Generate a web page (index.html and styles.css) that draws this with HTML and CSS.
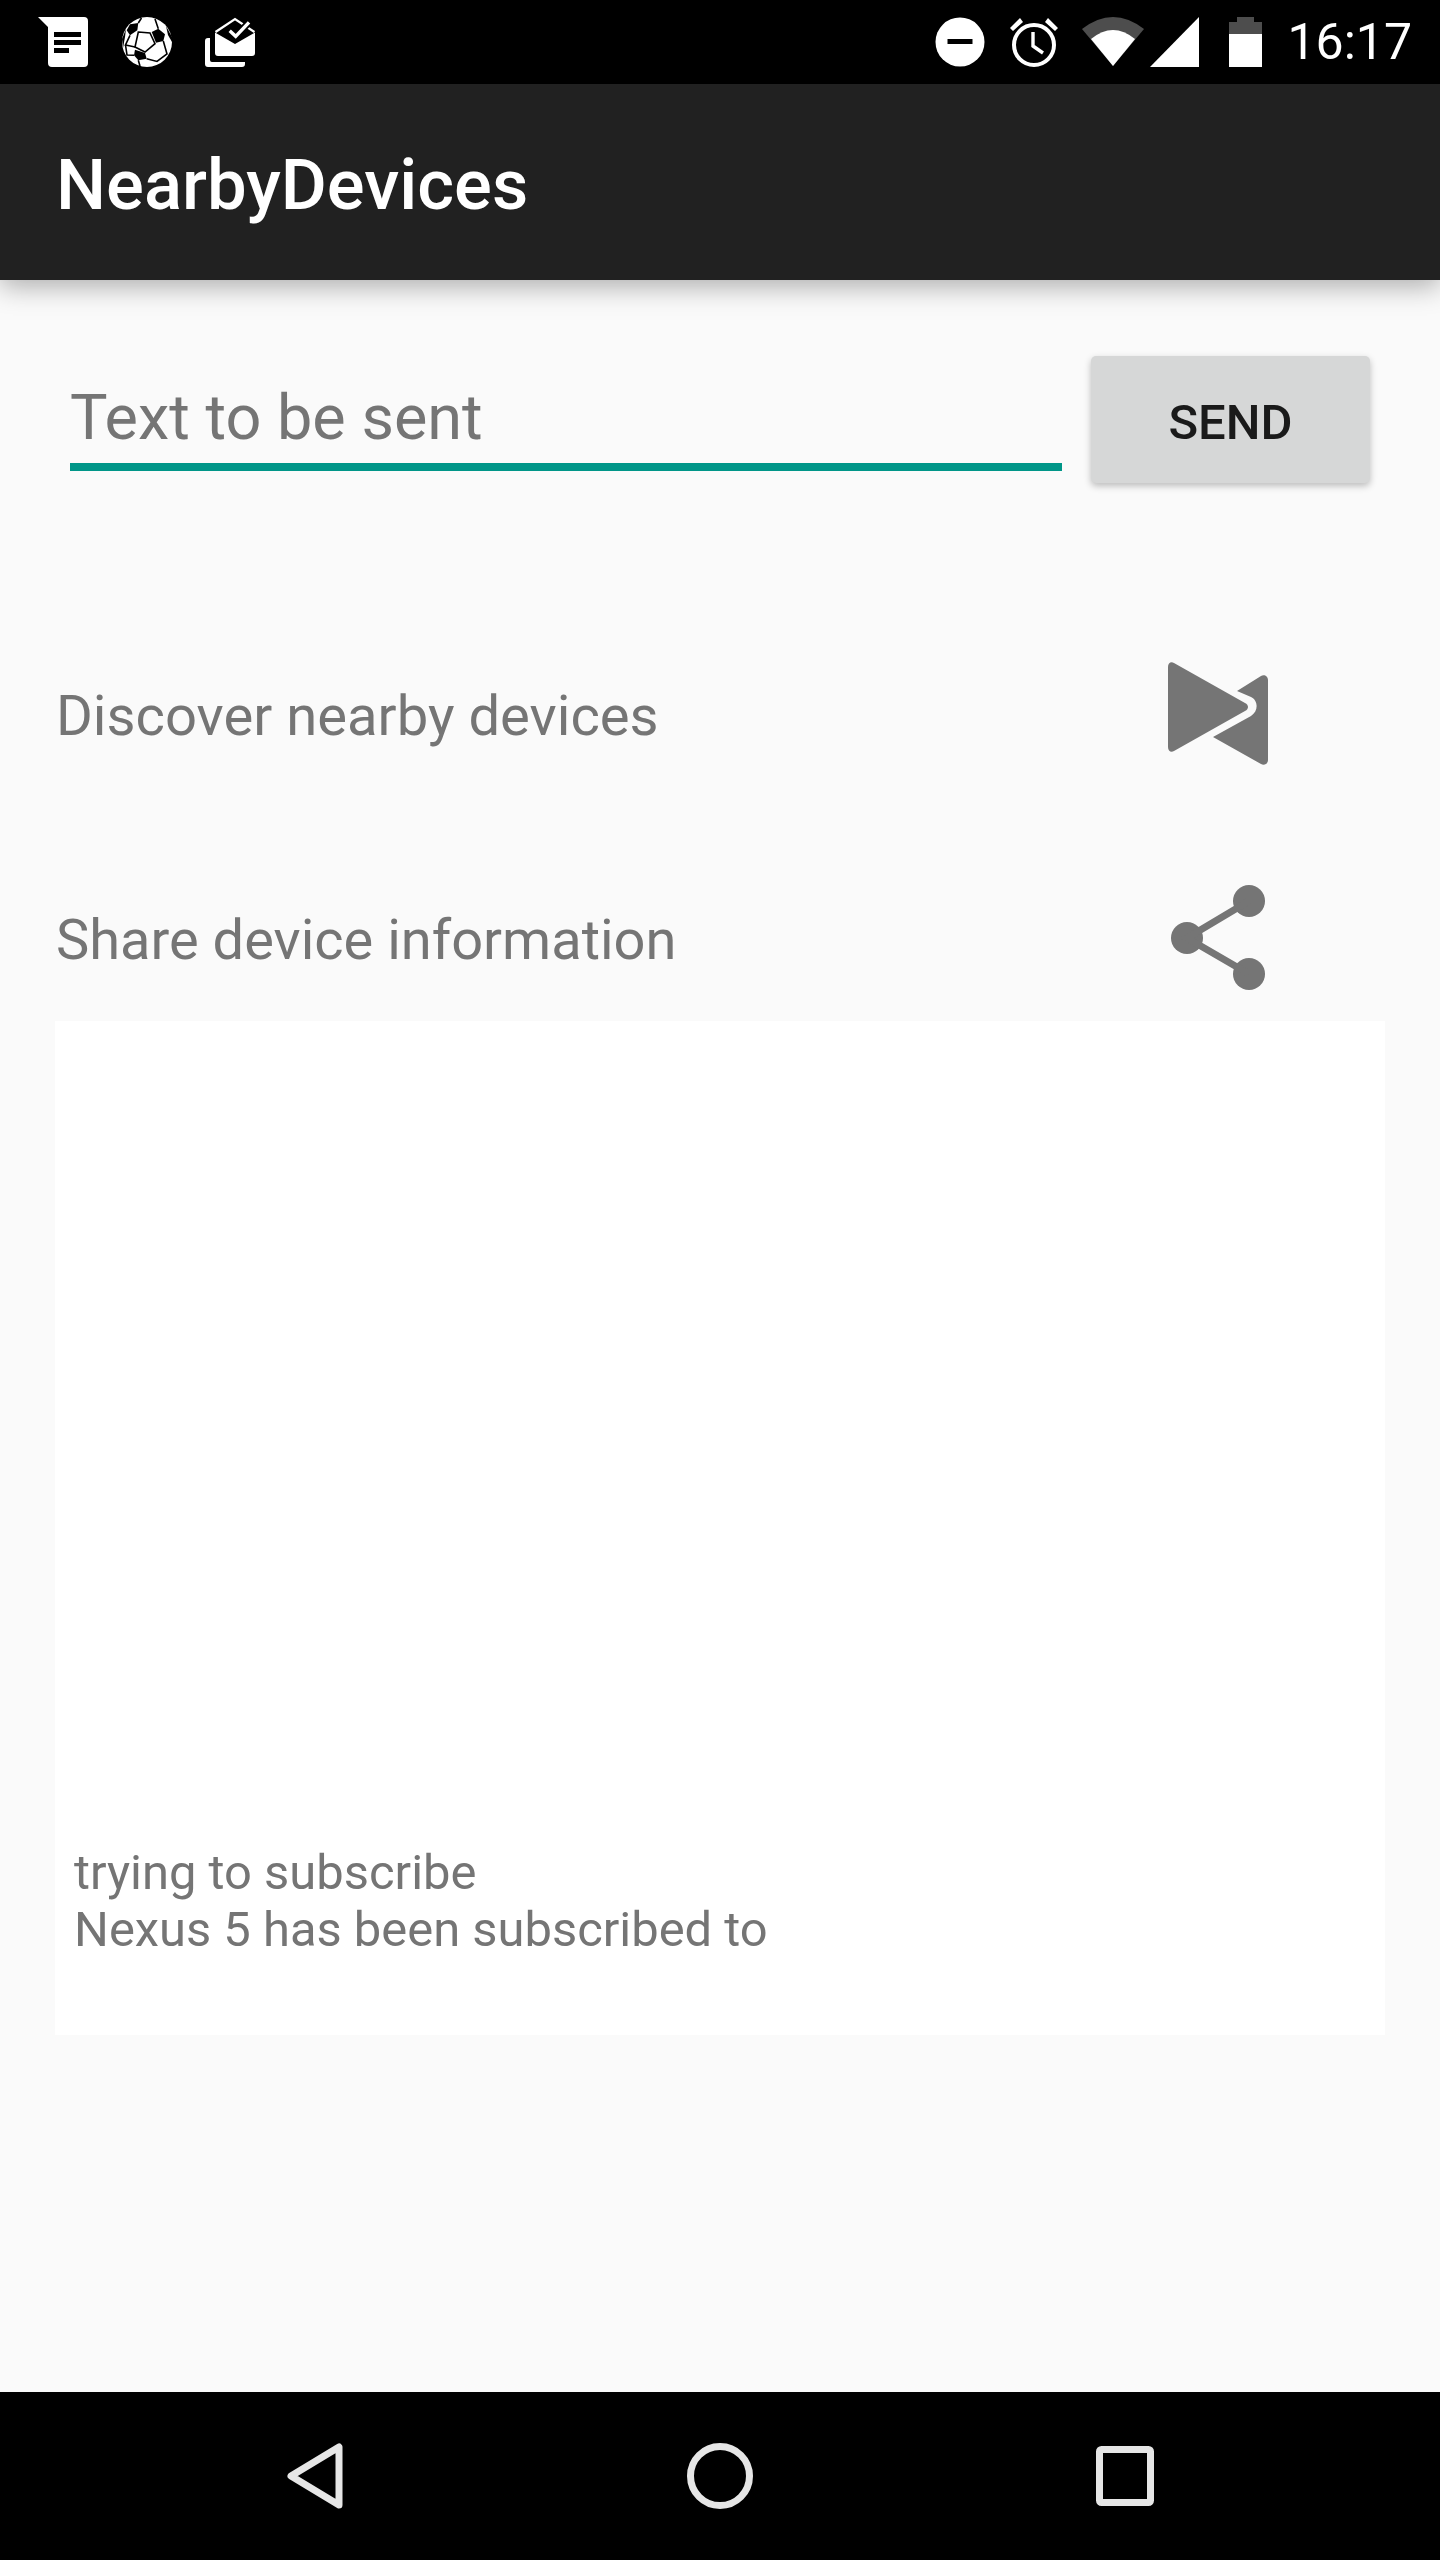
FILE: index.html
```html
<!DOCTYPE html>
<html lang="en">
<head>
    <meta charset="UTF-8">
    <title>NearbyDevices</title>
    <link rel="stylesheet" href="styles.css">
</head>
<body>
    <!-- status bar -->
    <div class="status-bar">
        <div class="status-left">
            <svg class="ic-msg" viewBox="0 0 50 50">
                <path fill="#fff" d="M0 0H46a4 4 0 0 1 4 4V46a4 4 0 0 1-4 4H14a4 4 0 0 1-4-4V10Z"/>
                <path fill="#000" d="M16 15H43V20H16ZM16 23H43V28H16ZM16 31H31V36H16Z"/>
            </svg>
            <svg class="ic-ball" viewBox="0 0 50 50">
                <circle cx="25" cy="25" r="25" fill="#fff"/>
                <g fill="#000">
                    <path d="M29.700 15 36.300 11.700 43 17.300 41.300 24 34 25.700Z"/>
                    <path d="M4.700 13.300 8 7.300 16.300 6 15.300 13.300 8 18.300Z"/>
                    <path d="M13 32.700 23 36 24.700 41.700 16.300 43.300 12 38.300Z"/>
                    <path d="M44 9 50 20 50 25 46 18Z"/>
                    <path d="M0 22 4 12 3 20 1 31Z"/>
                </g>
                <g fill="none" stroke="#000" stroke-width="1.600">
                    <path d="M16.300 15 28 16 33 26.700 23 35 13 30Z"/>
                    <path d="M16.300 6 19.500 1M36.300 11.700 33 2M8 18.300 3.500 28 13 30M41.300 24 45 37 35 44.500 24.700 41.700"/>
                    <path d="M3.500 28 5 38 12 38.300M16.300 43.300 18 49"/>
                </g>
            </svg>
            <svg class="ic-mail" viewBox="0 0 50 50">
                <path fill="#fff" d="M0 24a3 3 0 0 1 3-3H5V43a2 2 0 0 0 2 2H40V47a3 3 0 0 1-3 3H3a3 3 0 0 1-3-3Z"/>
                <path fill="#fff" d="M10 15.500 30 27 50 15.500V36a3 3 0 0 1-3 3H13a3 3 0 0 1-3-3Z"/>
                <path fill="none" stroke="#fff" stroke-width="2.200" d="M10.500 15 30 2 49.500 15"/>
                <path fill="none" stroke="#000" stroke-width="7" d="M24.700 13.700 30.700 19.300 44 5.300"/>
                <path fill="none" stroke="#fff" stroke-width="3.400" d="M24.700 13.700 30.700 19.300 44 5.300"/>
            </svg>
        </div>
        <div class="status-right">
            <svg class="ic-dnd" viewBox="0 0 50 50">
                <circle cx="25" cy="25" r="24.500" fill="#fff"/>
                <path fill="#000" d="M12.500 22H37.500V27H12.500Z"/>
            </svg>
            <svg class="ic-alarm" viewBox="0 0 48 50">
                <circle cx="24" cy="28" r="20" fill="none" stroke="#fff" stroke-width="4"/>
                <path fill="none" stroke="#fff" stroke-width="3.400" d="M23 15V29L33 36"/>
                <path fill="#fff" d="M0 11 10 1 13 5 3 14ZM48 11 38 1 35 5 45 14Z"/>
            </svg>
            <svg class="ic-wifi" viewBox="0 0 62 50">
                <path fill="#4d4d4d" d="M0 12Q31 -12 62 12L31 49Z"/>
                <path fill="#fff" d="M9 22Q31 4 53 22L31 49Z"/>
            </svg>
            <svg class="ic-signal" viewBox="0 0 49 50">
                <path fill="#fff" d="M0 50 49 0V50Z"/>
            </svg>
            <svg class="ic-battery" viewBox="0 0 33 50">
                <path fill="#4d4d4d" d="M8 0H25V5H33V17H0V5H8Z"/>
                <path fill="#fff" d="M0 17H33V50H0Z"/>
            </svg>
            <span class="clock">16:17</span>
        </div>
    </div>

    <!-- app bar -->
    <div class="app-bar">NearbyDevices</div>

    <!-- content -->
    <div class="content">
        <div class="send-row">
            <div class="text-field">Text to be sent</div>
            <div class="send-btn">SEND</div>
        </div>
        <div class="action-row discover">
            <span>Discover nearby devices</span>
            <svg class="ic-nearby" viewBox="0 0 100 103">
                <path fill="#757575" d="M0 5C0 1 3 -1 6 1L77 41C81 43 81 47 77 49L6 89C3 91 0 89 0 85Z"/>
                <path fill="#757575" d="M69 29 93 14C96 12 100 14 100 18V98C100 102 96 104 93 102L45 75 83 54C91 49 90 38 83 35Z"/>
            </svg>
        </div>
        <div class="action-row share">
            <span>Share device information</span>
            <svg class="ic-share" viewBox="0 0 94 106">
                <g fill="#757575">
                    <circle cx="78" cy="16" r="16"/>
                    <circle cx="16" cy="53" r="16"/>
                    <circle cx="78" cy="89" r="16"/>
                </g>
                <path fill="none" stroke="#757575" stroke-width="7" d="M78 16 16 53 78 89"/>
            </svg>
        </div>
        <div class="log-panel">
            <div>trying to subscribe</div>
            <div>Nexus 5 has been subscribed to</div>
        </div>
    </div>

    <!-- nav bar -->
    <div class="nav-bar">
        <svg class="ic-back" viewBox="0 0 56 66">
            <path fill="none" stroke="#e6e6e6" stroke-width="7" stroke-linejoin="round" d="M52 4V62L4 33Z"/>
        </svg>
        <svg class="ic-home" viewBox="0 0 66 66">
            <circle cx="33" cy="33" r="29.500" fill="none" stroke="#e6e6e6" stroke-width="7"/>
        </svg>
        <svg class="ic-recent" viewBox="0 0 58 60">
            <rect x="3.500" y="3.500" width="51" height="53" rx="2" fill="none" stroke="#e6e6e6" stroke-width="7"/>
        </svg>
    </div>
</body>
</html>
```

FILE: styles.css
```css
/* base */
body {
    margin: 0;
    height: 100vh;
    display: flex;
    flex-direction: column;
    background-color: #fafafa;
    font-family: Roboto, "Liberation Sans", sans-serif;
    overflow: hidden;
}

svg {
    display: block;
    flex: none;
}

/* status bar */
.status-bar {
    height: 84px;
    flex: none;
    display: flex;
    justify-content: space-between;
    align-items: center;
    background-color: #000;
    color: #fff;
}
.status-left {
    display: flex;
    align-items: center;
    gap: 34px;
    padding-left: 38px;
}
.status-right {
    display: flex;
    align-items: center;
    padding-right: 28px;
}
.ic-msg, .ic-ball, .ic-mail {
    width: 50px;
    height: 50px;
}
.ic-mail {
    margin-left: -1px;
}
.ic-dnd {
    width: 50px;
    height: 50px;
}
.ic-alarm {
    width: 48px;
    height: 50px;
    margin-left: 25px;
}
.ic-wifi {
    width: 62px;
    height: 50px;
    margin-left: 24px;
}
.ic-signal {
    width: 49px;
    height: 50px;
    margin-left: 6px;
}
.ic-battery {
    width: 33px;
    height: 50px;
    margin-left: 30px;
}
.clock {
    margin-left: 25px;
    font-size: 50px;
    line-height: 50px;
}

/* app bar */
.app-bar {
    height: 196px;
    flex: none;
    box-sizing: border-box;
    display: flex;
    align-items: center;
    padding: 6px 0 0 56px;
    background-color: #212121;
    color: #fff;
    font-size: 70.6px;
    font-weight: 500;
    box-shadow: 0 6px 26px rgba(0, 0, 0, 0.32);
    position: relative;
}

/* content */
.content {
    flex: 1;
    display: flex;
    flex-direction: column;
    padding: 76px 55px 0;
}
.send-row {
    display: flex;
    align-items: flex-start;
    padding-left: 15px;
    gap: 29px;
}
.text-field {
    flex: 1;
    height: 115px;
    box-sizing: border-box;
    padding-top: 16px;
    border-bottom: 8px solid #009688;
    color: #757575;
    font-size: 63px;
    line-height: 92px;
}
.send-btn {
    width: 279px;
    height: 127px;
    box-sizing: border-box;
    margin-right: 15px;
    padding-top: 6px;
    display: flex;
    align-items: center;
    justify-content: center;
    border-radius: 5px;
    background-color: #d6d7d7;
    color: #1a1a1a;
    font-size: 49px;
    font-weight: 500;
    box-shadow: 0 3px 7px rgba(0, 0, 0, 0.25);
}
.action-row {
    display: flex;
    align-items: center;
    justify-content: space-between;
    padding-right: 117px;
    color: #757575;
    font-size: 56px;
}
.action-row span {
    padding: 4px 0 0 1px;
}
.discover {
    font-size: 56.2px;
    margin-top: 179px;
}
.share {
    margin-top: 120px;
    padding-right: 120px;
}
.ic-nearby {
    width: 100px;
    height: 103px;
}
.ic-share {
    width: 94px;
    height: 106px;
}
.log-panel {
    height: 1014px;
    margin-top: 30px;
    box-sizing: border-box;
    display: flex;
    flex-direction: column;
    justify-content: flex-end;
    padding: 0 0 77px 19px;
    background-color: #fff;
    color: #757575;
    font-size: 48.9px;
    line-height: 57px;
}

/* nav bar */
.nav-bar {
    height: 168px;
    flex: none;
    position: relative;
    display: flex;
    align-items: center;
    background-color: #000;
}
.ic-back {
    width: 56px;
    height: 66px;
    margin-left: 287px;
}
.ic-home {
    width: 66px;
    height: 66px;
    margin-left: 344px;
}
.ic-recent {
    width: 58px;
    height: 60px;
    margin-left: 343px;
}
```
